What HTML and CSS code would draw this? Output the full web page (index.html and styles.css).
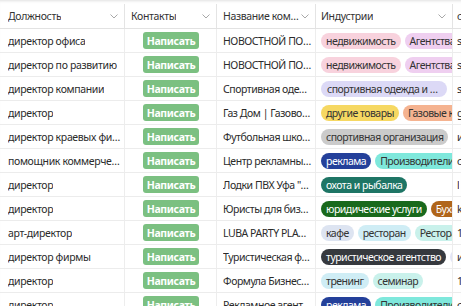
FILE: index.html
```html
<!DOCTYPE html>
<html lang="ru">
<head>
<meta charset="utf-8">
<link rel="stylesheet" href="styles.css">
</head>
<body>
<div class="grid">
  <div class="row head">
    <div class="c c1"><span class="ht">Должность</span><svg class="chev" viewBox="0 0 8 5"><path d="M0.5 0.5 L4 4 L7.5 0.5"/></svg></div>
    <div class="c c2"><span class="ht">Контакты</span><svg class="chev" viewBox="0 0 8 5"><path d="M0.5 0.5 L4 4 L7.5 0.5"/></svg></div>
    <div class="c c3"><span class="ht">Название компании</span><svg class="chev" viewBox="0 0 8 5"><path d="M0.5 0.5 L4 4 L7.5 0.5"/></svg></div>
    <div class="c c4"><span class="ht">Индустрии</span><svg class="chev" viewBox="0 0 8 5"><path d="M0.5 0.5 L4 4 L7.5 0.5"/></svg></div>
    <div class="c c5"><span class="ht">с</span></div>
  </div>

  <div class="row">
    <div class="c c1"><span class="t">директор офиса</span></div>
    <div class="c c2"><span class="btn">Написать</span></div>
    <div class="c c3"><span class="t">НОВОСТНОЙ ПОРТАЛ УФЫ</span></div>
    <div class="c c4"><span class="tag pink">недвижимость</span><span class="tag orchid">Агентства</span></div>
    <div class="c c5"><span class="t">s</span></div>
  </div>
  <div class="row">
    <div class="c c1"><span class="t">директор по развитию</span></div>
    <div class="c c2"><span class="btn">Написать</span></div>
    <div class="c c3"><span class="t">НОВОСТНОЙ ПОРТАЛ УФЫ</span></div>
    <div class="c c4"><span class="tag pink">недвижимость</span><span class="tag orchid">Агентства</span></div>
    <div class="c c5"><span class="t">s</span></div>
  </div>
  <div class="row">
    <div class="c c1"><span class="t">директор компании</span></div>
    <div class="c c2"><span class="btn">Написать</span></div>
    <div class="c c3"><span class="t">Спортивная одежда и обувь</span></div>
    <div class="c c4"><span class="tag lav wide">спортивная одежда и обувь</span></div>
    <div class="c c5"><span class="t">s</span></div>
  </div>
  <div class="row">
    <div class="c c1"><span class="t">директор</span></div>
    <div class="c c2"><span class="btn">Написать</span></div>
    <div class="c c3"><span class="t">Газ Дом | Газовое оборудование</span></div>
    <div class="c c4"><span class="tag yellow">другие товары</span><span class="tag salmon">Газовые котлы</span></div>
    <div class="c c5"><span class="t">g</span></div>
  </div>
  <div class="row">
    <div class="c c1"><span class="t">директор краевых филиалов</span></div>
    <div class="c c2"><span class="btn">Написать</span></div>
    <div class="c c3"><span class="t">Футбольная школа Уфа</span></div>
    <div class="c c4"><span class="tag grey">спортивная организация</span><span class="tag blue">спорт</span></div>
    <div class="c c5"><span class="t">и</span></div>
  </div>
  <div class="row">
    <div class="c c1"><span class="t">помощник коммерческого директора</span></div>
    <div class="c c2"><span class="btn">Написать</span></div>
    <div class="c c3"><span class="t">Центр рекламных технологий</span></div>
    <div class="c c4"><span class="tag navy">реклама</span><span class="tag aqua">Производители</span></div>
    <div class="c c5"><span class="t">с</span></div>
  </div>
  <div class="row">
    <div class="c c1"><span class="t">директор</span></div>
    <div class="c c2"><span class="btn">Написать</span></div>
    <div class="c c3"><span class="t">Лодки ПВХ Уфа "Лодочник"</span></div>
    <div class="c c4"><span class="tag teal">охота и рыбалка</span></div>
    <div class="c c5"><span class="t">l</span></div>
  </div>
  <div class="row">
    <div class="c c1"><span class="t">директор</span></div>
    <div class="c c2"><span class="btn">Написать</span></div>
    <div class="c c3"><span class="t">Юристы для бизнеса Уфа</span></div>
    <div class="c c4"><span class="tag green">юридические услуги</span><span class="tag brown">Бухгалтерия</span></div>
    <div class="c c5"><span class="t">k</span></div>
  </div>
  <div class="row">
    <div class="c c1"><span class="t">арт-директор</span></div>
    <div class="c c2"><span class="btn">Написать</span></div>
    <div class="c c3"><span class="t">LUBA PARTY PLACE Уфа</span></div>
    <div class="c c4"><span class="tag ice">кафе</span><span class="tag cyan">ресторан</span><span class="tag mint">Рестораны</span></div>
    <div class="c c5"><span class="t">1</span></div>
  </div>
  <div class="row">
    <div class="c c1"><span class="t">директор фирмы</span></div>
    <div class="c c2"><span class="btn">Написать</span></div>
    <div class="c c3"><span class="t">Туристическая фирма Уфа</span></div>
    <div class="c c4"><span class="tag dark">туристическое агентство</span><span class="tag lavl">туризм</span></div>
    <div class="c c5"><span class="t">и</span></div>
  </div>
  <div class="row">
    <div class="c c1"><span class="t">директор</span></div>
    <div class="c c2"><span class="btn">Написать</span></div>
    <div class="c c3"><span class="t">Формула Бизнеса Уфа</span></div>
    <div class="c c4"><span class="tag cyan">тренинг</span><span class="tag mint">семинар</span></div>
    <div class="c c5"><span class="t">1</span></div>
  </div>
  <div class="row">
    <div class="c c1"><span class="t">директор</span></div>
    <div class="c c2"><span class="btn">Написать</span></div>
    <div class="c c3"><span class="t">Рекламное агентство</span></div>
    <div class="c c4"><span class="tag navy">реклама</span><span class="tag aqua">Производители</span></div>
    <div class="c c5"><span class="t">с</span></div>
  </div>
</div>
</body>
</html>
```

FILE: styles.css
```css
html, body {
  margin: 0;
  padding: 0;
  background: #ffffff;
  overflow: hidden;
}
body {
  font-family: "Noto Sans", sans-serif;
  font-size: 10.5px;
  letter-spacing: -0.35px;
  color: #2b2b2b;
  padding-top: 4px;
  box-shadow: inset 0 3px 3px -2px rgba(0,0,0,0.12);
}
.grid {
  display: flex;
  flex-direction: column;
  width: 600px;
}
.row {
  display: grid;
  grid-template-columns: 125px 92px 99px 137px 140px;
  height: 24px;
  border-bottom: 1px solid #ececec;
  box-sizing: border-box;
}
.head {
  border-bottom: 1px solid #e2e2e2;
  height: 25px;
}
.c {
  display: flex;
  align-items: center;
  padding-left: 8px;
  border-right: 1px solid #ededed;
  overflow: hidden;
  white-space: nowrap;
  min-width: 0;
  box-sizing: border-box;
}
.c1 { padding-right: 1px; }
.head .c {
  justify-content: space-between;
  padding-right: 6px;
  border-right-color: #e4e4e4;
}
.c2 { padding-left: 18px; }
.head .c2 { padding-left: 6px; }
.c3 { padding-left: 6px; padding-right: 3px; }
.c3 .t { letter-spacing: -0.45px; }
.c4 { padding-left: 5px; gap: 4px; }
.c5 { padding-left: 4px; }
.ht {
  overflow: hidden;
  text-overflow: ellipsis;
  white-space: nowrap;
  color: #333;
}
.t {
  overflow: hidden;
  text-overflow: ellipsis;
  white-space: nowrap;
}
.chev {
  width: 8px;
  height: 5px;
  flex: none;
  fill: none;
  stroke: #a8a8a8;
  stroke-width: 1;
}
.btn {
  display: inline-flex;
  align-items: center;
  justify-content: center;
  width: 56px;
  height: 17px;
  border-radius: 3px;
  background: #7bc081;
  color: #ffffff;
  font-weight: 700;
}
.tag {
  display: inline-flex;
  align-items: center;
  height: 16px;
  padding: 0 5px;
  border-radius: 8px;
  flex: none;
  color: #333;
  letter-spacing: -0.5px;
}
.wide {
  box-sizing: border-box;
  width: 126px;
  overflow: hidden;
  text-overflow: ellipsis;
  display: inline-block;
  line-height: 16px;
  padding: 0 6px;
}
.pink { background: #f8d2dd; }
.orchid { background: #efcff0; }
.lav { background: #dcd9f6; }
.lavl { background: #e2e4f6; }
.yellow { background: #f6d862; }
.salmon { background: #f5b390; }
.grey { background: #cbcbcb; }
.blue { background: #2d5ccc; color: #fff; }
.navy { background: #24409a; color: #fff; }
.aqua { background: #7fe8dc; }
.teal { background: #1e7565; color: #fff; }
.green { background: #19691c; color: #fff; }
.brown { background: #b0651a; color: #fff; }
.ice { background: #dde4f1; }
.cyan { background: #cfedf5; }
.mint { background: #c9f1eb; }
.dark { background: #36393e; color: #fff; }
```
